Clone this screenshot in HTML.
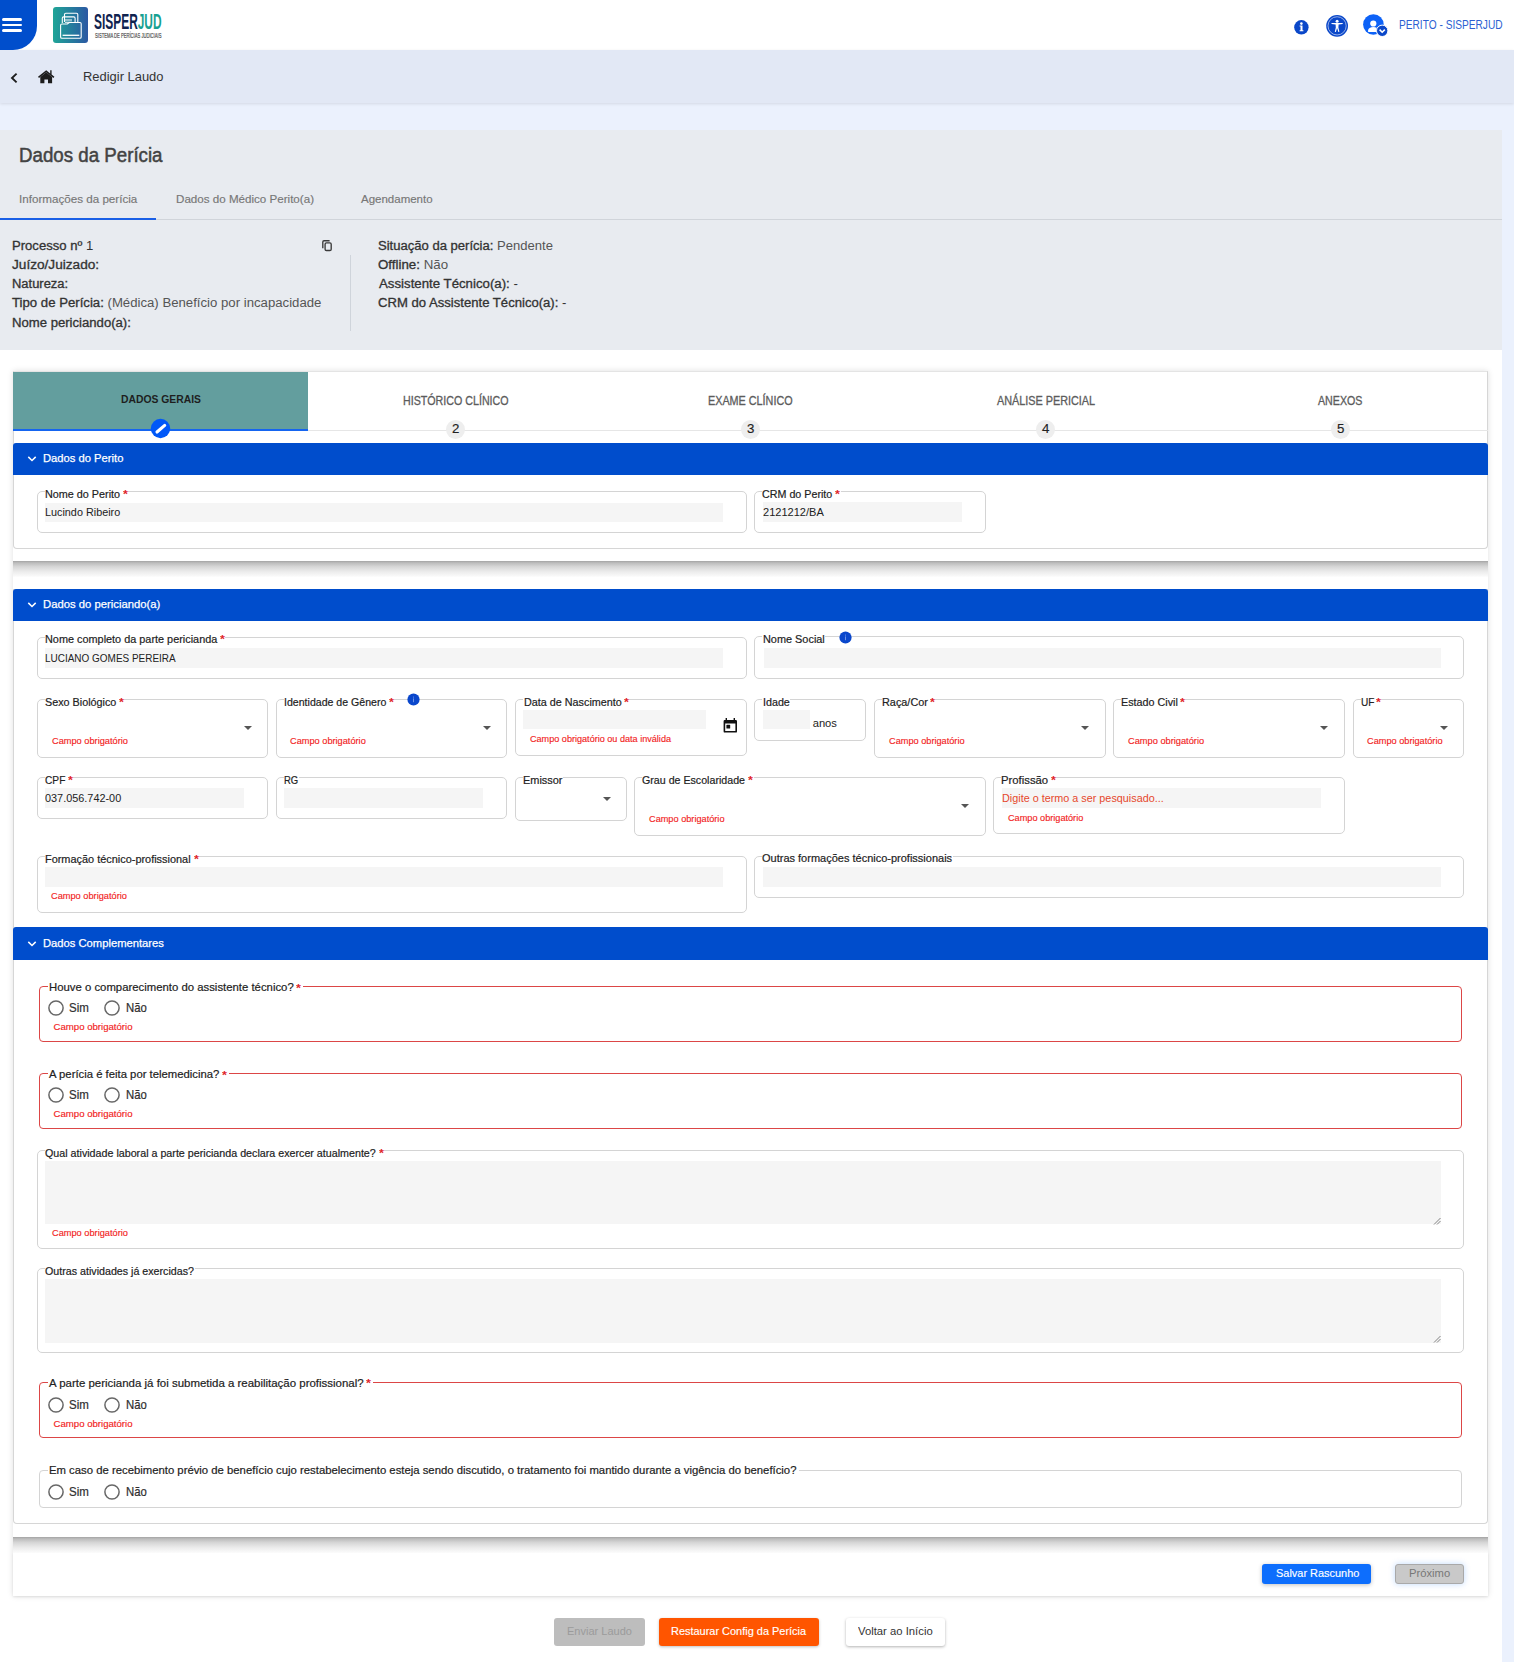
<!DOCTYPE html><html><head><meta charset="utf-8"><style>

*{margin:0;padding:0;box-sizing:border-box}
html,body{width:1514px;height:1662px;overflow:hidden;background:#ebf1fd;font-family:"Liberation Sans",sans-serif}
.a{position:absolute}
.t{position:absolute;white-space:nowrap;line-height:1;transform-origin:0 0}
.t b{font-weight:700}
.fs{position:absolute;border:1px solid #d4d4d4;border-radius:5px;background:#fff}
.ib{position:absolute;background:#f5f5f5}
.lgbg{position:absolute;background:#fff;height:4px}
.arr{position:absolute;width:0;height:0;border-left:4px solid transparent;border-right:4px solid transparent;border-top:4px solid #555}
.rd{position:absolute;width:16px;height:16px;border:1.8px solid #5c5c5c;border-radius:50%}
.hdr{position:absolute;left:13px;width:1475px;background:#004dcc;border-radius:3px 3px 0 0}
.ast{color:#e0262b}

</style></head><body>
<div class="a" style="left:0;top:0;width:1514px;height:50px;background:#fff"></div>
<div class="a" style="left:0;top:50px;width:1514px;height:53px;background:#e2e8f5;box-shadow:0 1px 3px rgba(0,0,0,.10)"></div>
<div class="a" style="left:0;top:0;width:37px;height:50px;background:#004ecc;border-bottom-right-radius:24px"></div>
<div class="a" style="left:2px;top:18.15px;width:20px;height:2.5px;background:#fff;border-radius:2px"></div>
<div class="a" style="left:2px;top:23.95px;width:20px;height:2.5px;background:#fff;border-radius:2px"></div>
<div class="a" style="left:2px;top:29.25px;width:20px;height:2.5px;background:#fff;border-radius:2px"></div>
<div class="a" style="left:53px;top:7px;width:35px;height:36px;border-radius:3px;background:linear-gradient(90deg,#1fa597,#2b58a3)"></div>
<svg class="a" style="left:53px;top:7px" width="35" height="36" viewBox="0 0 35 36" fill="none" stroke="#fff" stroke-width="1.1">
<path d="M11.5 15 V7.5 a1.3 1.3 0 0 1 1.3 -1.3 H23.5 a1.3 1.3 0 0 1 1.3 1.3 V15"/>
<path d="M9.3 16 V11.2 a1.3 1.3 0 0 1 1.3 -1.3 H20.8 a1.3 1.3 0 0 1 1.3 1.3 V15.5"/>
<path d="M12 13 H19 M12 15.3 H19"/>
<path d="M7.6 30 V18.3 a1.3 1.3 0 0 1 1.3 -1.3 H14.3 l2 -1.5 H26.9 a1.3 1.3 0 0 1 1.3 1.3 V30 a1.3 1.3 0 0 1 -1.3 1.3 H8.9 a1.3 1.3 0 0 1 -1.3 -1.3 Z"/>
<path d="M9.6 28.3 H26.3" stroke-width="1.3"/>
</svg>
<svg class="a" style="left:1290px;top:12px" width="100" height="28" viewBox="1290 12 100 28">
<circle cx="1301.4" cy="27.3" r="7.2" fill="#0a47c9"/>
<circle cx="1301.4" cy="23.6" r="1.3" fill="#fff"/>
<path d="M1299.6 25.6 H1302.5 V30.2 H1303.4 V31.2 H1299.6 V30.2 H1300.5 V26.6 H1299.6 Z" fill="#fff"/>
<circle cx="1337.1" cy="25.85" r="10.9" fill="#0a47c9"/>
<circle cx="1337.1" cy="25.85" r="9.1" fill="none" stroke="#b9c9f0" stroke-width="0.8"/>
<circle cx="1337.1" cy="21.2" r="1.5" fill="#fff"/>
<path d="M1331.5 23 L1342.7 23 L1342.7 24.1 L1338.6 24.6 L1338.4 27.6 L1339.4 31.7 L1338.3 31.9 L1337.3 28.4 L1336.9 28.4 L1335.9 31.9 L1334.8 31.7 L1335.8 27.6 L1335.6 24.6 L1331.5 24.1 Z" fill="#fff"/>
<circle cx="1373.4" cy="24.5" r="10.3" fill="#0d62f7"/>
<circle cx="1373.3" cy="23.5" r="3.1" fill="#fff"/>
<path d="M1368.1 31.9 V30.3 c0 -1.9 2.4 -3.2 5.2 -3.2 c1.3 0 2.5 0.3 3.4 0.7 L1376.2 31.9 Z" fill="#fff"/>
<circle cx="1382.2" cy="30.8" r="5.7" fill="#0a47c9" stroke="#fff" stroke-width="1"/>
<path d="M1379.6 29.6 L1382.2 32.2 L1384.8 29.6" fill="none" stroke="#fff" stroke-width="1.6"/>
</svg>
<svg class="a" style="left:8px;top:66px" width="52" height="22" viewBox="8 66 52 22">
<path d="M16.6 73.6 L12 78 L16.6 82.4" fill="none" stroke="#1d1d1d" stroke-width="1.9"/>
<path d="M46.2 70.2 L38 76.8 L39 78 L46.2 72.3 L53.4 78 L54.4 76.8 L51.6 74.5 V70.3 H50.2 V73.4 Z" fill="#1d1d1d"/>
<path d="M40.3 76.9 L46.2 72.3 L52.1 76.9 V83.3 H48 V79.4 H44.4 V83.3 H40.3 Z" fill="#1d1d1d"/>
</svg>
<div class="a" style="left:0;top:129.5px;width:1502px;height:220.5px;background:#e8ebf0"></div>
<div class="a" style="left:0;top:219px;width:1502px;height:1px;background:#d0d4da"></div>
<div class="a" style="left:0;top:217.5px;width:156px;height:2px;background:#1a5fe6"></div>
<svg class="a" style="left:315px;top:235px" width="25" height="20" viewBox="315 235 25 20">
<path d="M322.8 248.2 V241.9 a1.2 1.2 0 0 1 1.2 -1.2 H329.6" fill="none" stroke="#3a3a3a" stroke-width="1.35"/>
<rect x="325.1" y="242.9" width="6.1" height="7.6" rx="1.3" fill="none" stroke="#3a3a3a" stroke-width="1.35"/>
</svg>
<div class="a" style="left:350px;top:255px;width:1px;height:76px;background:#cfd4db"></div>
<div class="a" style="left:0;top:350px;width:1502px;height:1312px;background:#fff"></div>
<div class="a" style="left:13px;top:371px;width:1475px;height:1225px;background:#fff;box-shadow:0 0 6px rgba(0,0,0,.13)"></div>
<div class="a" style="left:13px;top:371px;width:1475px;height:177.5px;border:1px solid #d6d6d6;border-top-color:#e4e4e4;border-radius:0 0 4px 4px;background:#fff"></div>
<div class="a" style="left:13px;top:561px;width:1475px;height:16px;background:linear-gradient(180deg,#a3a3a3 0%,#bdbdbd 12%,#d6d6d6 35%,#ebebeb 65%,#f7f7f7 90%,#fdfdfd 100%)"></div>
<div class="a" style="left:13px;top:372px;width:295px;height:58px;background:#639e9e"></div>
<div class="a" style="left:308px;top:429.5px;width:1180px;height:1.5px;background:#e6e6e6"></div>
<div class="a" style="left:13px;top:429px;width:295px;height:2px;background:#1565f0"></div>
<svg class="a" style="left:150px;top:418px" width="21" height="21" viewBox="0 0 21 21">
<circle cx="10.5" cy="10.5" r="9.7" fill="#0058f8"/>
<path d="M7 14 L14.7 7.4" stroke="#fff" stroke-width="3.1" stroke-linecap="round"/>
</svg>
<div class="a" style="left:445.8px;top:419.5px;width:19px;height:19px;border-radius:50%;background:#eeeeee"></div>
<div class="a" style="left:741.1px;top:419.5px;width:19px;height:19px;border-radius:50%;background:#eeeeee"></div>
<div class="a" style="left:1036.3px;top:419.5px;width:19px;height:19px;border-radius:50%;background:#eeeeee"></div>
<div class="a" style="left:1331.1px;top:419.5px;width:19px;height:19px;border-radius:50%;background:#eeeeee"></div>
<div class="hdr" style="top:442.9px;height:32.10000000000002px"></div>
<svg class="a" style="left:27px;top:453.9px" width="10" height="10" viewBox="0 0 10 10"><path d="M1.3 2.9 L5 6.5 L8.7 2.9" fill="none" stroke="#fff" stroke-width="1.5"/></svg>
<div class="fs" style="left:37.0px;top:491.1px;width:709.5px;height:42.2px;border-color:#d4d4d4"></div>
<div class="a" style="left:45.0px;top:490.6px;width:83.0px;height:3px;background:#fff"></div>
<div class="ib" style="left:45.0px;top:502.5px;width:678.0px;height:19.5px"></div>
<div class="fs" style="left:754.0px;top:491.1px;width:231.9px;height:42.2px;border-color:#d4d4d4"></div>
<div class="a" style="left:762.0px;top:490.6px;width:78.6px;height:3px;background:#fff"></div>
<div class="ib" style="left:763.0px;top:502.3px;width:199.2px;height:19.4px"></div>
<div class="a" style="left:13px;top:589px;width:1475px;height:935px;border:1px solid #d6d6d6;border-top-color:#e4e4e4;border-radius:0 0 4px 4px;background:#fff"></div>
<div class="a" style="left:13px;top:1537px;width:1475px;height:16px;background:linear-gradient(180deg,#a3a3a3 0%,#bdbdbd 12%,#d6d6d6 35%,#ebebeb 65%,#f7f7f7 90%,#fdfdfd 100%)"></div>
<div class="hdr" style="top:588.5px;height:32.10000000000002px"></div>
<svg class="a" style="left:27px;top:599.5px" width="10" height="10" viewBox="0 0 10 10"><path d="M1.3 2.9 L5 6.5 L8.7 2.9" fill="none" stroke="#fff" stroke-width="1.5"/></svg>
<div class="fs" style="left:36.9px;top:636.5px;width:709.7px;height:42.5px;border-color:#d4d4d4"></div>
<div class="a" style="left:44.9px;top:636.0px;width:180.2px;height:3px;background:#fff"></div>
<div class="ib" style="left:45.0px;top:647.7px;width:678.0px;height:19.9px"></div>
<div class="fs" style="left:754.3px;top:636.3px;width:709.7px;height:42.6px;border-color:#d4d4d4"></div>
<div class="a" style="left:762.3px;top:635.8px;width:62.7px;height:3px;background:#fff"></div>
<svg class="a" style="left:839.2px;top:631.0px" width="13" height="13" viewBox="0 0 13 13"><circle cx="6.5" cy="6.5" r="6.1" fill="#0a47cc"/><rect x="6" y="5.4" width="1" height="3.8" fill="#6f93e6"/><rect x="6" y="3.6" width="1" height="1" fill="#6f93e6"/></svg>
<div class="ib" style="left:763.5px;top:647.7px;width:677.5px;height:20.1px"></div>
<div class="fs" style="left:36.9px;top:699.0px;width:231.3px;height:58.7px;border-color:#d4d4d4"></div>
<div class="a" style="left:44.9px;top:698.5px;width:79.1px;height:3px;background:#fff"></div>
<div class="arr" style="left:243.5px;top:726.0px"></div>
<div class="fs" style="left:276.1px;top:699.1px;width:231.4px;height:58.8px;border-color:#d4d4d4"></div>
<div class="a" style="left:284.1px;top:698.6px;width:110.4px;height:3px;background:#fff"></div>
<svg class="a" style="left:406.8px;top:693.4px" width="13" height="13" viewBox="0 0 13 13"><circle cx="6.5" cy="6.5" r="6.1" fill="#0a47cc"/><rect x="6" y="5.4" width="1" height="3.8" fill="#6f93e6"/><rect x="6" y="3.6" width="1" height="1" fill="#6f93e6"/></svg>
<div class="arr" style="left:482.6px;top:725.6px"></div>
<div class="fs" style="left:515.3px;top:699.1px;width:231.7px;height:56.6px;border-color:#d4d4d4"></div>
<div class="a" style="left:523.3px;top:698.6px;width:105.7px;height:3px;background:#fff"></div>
<div class="ib" style="left:523.2px;top:709.5px;width:183.3px;height:19.8px"></div>
<svg class="a" style="left:722px;top:716px" width="17" height="18" viewBox="0 0 17 18">
<path d="M3.6 2 V4 H2.8 a1.2 1.2 0 0 0 -1.2 1.2 V15.4 a1.2 1.2 0 0 0 1.2 1.2 H13.8 a1.2 1.2 0 0 0 1.2 -1.2 V5.2 a1.2 1.2 0 0 0 -1.2 -1.2 H13 V2 H11.6 V4 H5 V2 Z M3.2 7.4 H13.4 V15 H3.2 Z" fill="#111"/>
<rect x="4.4" y="8.8" width="3.8" height="3.8" rx="0.6" fill="#111"/>
</svg>
<div class="fs" style="left:754.3px;top:699.3px;width:112.2px;height:42.0px;border-color:#d4d4d4"></div>
<div class="a" style="left:762.3px;top:698.8px;width:27.7px;height:3px;background:#fff"></div>
<div class="ib" style="left:762.6px;top:709.5px;width:47.6px;height:19.6px"></div>
<div class="fs" style="left:874.0px;top:699.3px;width:232.0px;height:58.4px;border-color:#d4d4d4"></div>
<div class="a" style="left:882.0px;top:698.8px;width:53.4px;height:3px;background:#fff"></div>
<div class="arr" style="left:1080.7px;top:725.9px"></div>
<div class="fs" style="left:1113.1px;top:699.3px;width:231.9px;height:58.4px;border-color:#d4d4d4"></div>
<div class="a" style="left:1121.1px;top:698.8px;width:64.3px;height:3px;background:#fff"></div>
<div class="arr" style="left:1319.7px;top:725.9px"></div>
<div class="fs" style="left:1352.5px;top:699.3px;width:111.7px;height:58.4px;border-color:#d4d4d4"></div>
<div class="a" style="left:1360.5px;top:698.8px;width:20.9px;height:3px;background:#fff"></div>
<div class="arr" style="left:1439.5px;top:725.9px"></div>
<div class="fs" style="left:37.0px;top:777.4px;width:231.3px;height:42.0px;border-color:#d4d4d4"></div>
<div class="a" style="left:45.0px;top:776.9px;width:28.0px;height:3px;background:#fff"></div>
<div class="ib" style="left:44.9px;top:787.8px;width:199.5px;height:19.8px"></div>
<div class="fs" style="left:275.8px;top:777.4px;width:231.7px;height:42.0px;border-color:#d4d4d4"></div>
<div class="a" style="left:283.8px;top:776.9px;width:15.1px;height:3px;background:#fff"></div>
<div class="ib" style="left:284.3px;top:787.8px;width:199.2px;height:19.8px"></div>
<div class="fs" style="left:515.0px;top:777.4px;width:111.7px;height:44.0px;border-color:#d4d4d4"></div>
<div class="a" style="left:523.0px;top:776.9px;width:40.4px;height:3px;background:#fff"></div>
<div class="arr" style="left:602.6px;top:797.1px"></div>
<div class="fs" style="left:634.2px;top:777.4px;width:351.9px;height:59.0px;border-color:#d4d4d4"></div>
<div class="a" style="left:642.2px;top:776.9px;width:111.4px;height:3px;background:#fff"></div>
<div class="arr" style="left:961.4px;top:804.2px"></div>
<div class="fs" style="left:993.2px;top:777.4px;width:351.9px;height:56.9px;border-color:#d4d4d4"></div>
<div class="a" style="left:1001.2px;top:776.9px;width:54.8px;height:3px;background:#fff"></div>
<div class="ib" style="left:1002.0px;top:787.8px;width:318.8px;height:19.8px"></div>
<div class="fs" style="left:37.0px;top:856.4px;width:709.5px;height:56.9px;border-color:#d4d4d4"></div>
<div class="a" style="left:45.0px;top:855.9px;width:154.0px;height:3px;background:#fff"></div>
<div class="ib" style="left:45.0px;top:867.2px;width:678.0px;height:19.4px"></div>
<div class="fs" style="left:754.0px;top:855.7px;width:710.3px;height:42.6px;border-color:#d4d4d4"></div>
<div class="a" style="left:762.0px;top:855.2px;width:191.0px;height:3px;background:#fff"></div>
<div class="ib" style="left:763.0px;top:866.8px;width:677.7px;height:19.8px"></div>
<div class="hdr" style="top:927.3px;height:32.5px"></div>
<svg class="a" style="left:27px;top:938.5px" width="10" height="10" viewBox="0 0 10 10"><path d="M1.3 2.9 L5 6.5 L8.7 2.9" fill="none" stroke="#fff" stroke-width="1.5"/></svg>
<div class="a" style="left:38.5px;top:986.4px;width:1423.5px;height:55.5px;border:1px solid #dc4646;border-radius:4px"></div>
<div class="a" style="left:47.5px;top:985.4px;width:255.5px;height:4px;background:#fff"></div>
<svg class="a" style="left:46.5px;top:998.7px" width="18" height="18" viewBox="0 0 18 18"><circle cx="9" cy="9" r="7.1" fill="none" stroke="#676767" stroke-width="1.5"/></svg>
<svg class="a" style="left:103.0px;top:998.7px" width="18" height="18" viewBox="0 0 18 18"><circle cx="9" cy="9" r="7.1" fill="none" stroke="#676767" stroke-width="1.5"/></svg>
<div class="a" style="left:38.5px;top:1073.4px;width:1423.5px;height:55.5px;border:1px solid #dc4646;border-radius:4px"></div>
<div class="a" style="left:47.5px;top:1072.4px;width:181.5px;height:4px;background:#fff"></div>
<svg class="a" style="left:46.5px;top:1085.7px" width="18" height="18" viewBox="0 0 18 18"><circle cx="9" cy="9" r="7.1" fill="none" stroke="#676767" stroke-width="1.5"/></svg>
<svg class="a" style="left:103.0px;top:1085.7px" width="18" height="18" viewBox="0 0 18 18"><circle cx="9" cy="9" r="7.1" fill="none" stroke="#676767" stroke-width="1.5"/></svg>
<div class="fs" style="left:36.9px;top:1150.1px;width:1427.1px;height:98.7px;border-color:#d4d4d4"></div>
<div class="a" style="left:44.9px;top:1149.6px;width:338.8px;height:3px;background:#fff"></div>
<div class="ib" style="left:45.3px;top:1160.6px;width:1395.7px;height:63.9px"></div>
<div class="fs" style="left:36.9px;top:1268.4px;width:1427.1px;height:84.6px;border-color:#d4d4d4"></div>
<div class="a" style="left:44.9px;top:1267.9px;width:149.9px;height:3px;background:#fff"></div>
<div class="ib" style="left:45.3px;top:1279.0px;width:1395.7px;height:63.7px"></div>
<svg class="a" style="left:1432px;top:1215.5px" width="9" height="9" viewBox="0 0 9 9"><path d="M2 8.5 L8.5 2 M5 8.5 L8.5 5" stroke="#777" stroke-width="0.9"/></svg>
<svg class="a" style="left:1432px;top:1333.7px" width="9" height="9" viewBox="0 0 9 9"><path d="M2 8.5 L8.5 2 M5 8.5 L8.5 5" stroke="#777" stroke-width="0.9"/></svg>
<div class="a" style="left:38.5px;top:1382.3px;width:1423.5px;height:55.7px;border:1px solid #dc4646;border-radius:4px"></div>
<div class="a" style="left:47.5px;top:1381.3px;width:325.0px;height:4px;background:#fff"></div>
<svg class="a" style="left:46.5px;top:1395.5px" width="18" height="18" viewBox="0 0 18 18"><circle cx="9" cy="9" r="7.1" fill="none" stroke="#676767" stroke-width="1.5"/></svg>
<svg class="a" style="left:103.0px;top:1395.5px" width="18" height="18" viewBox="0 0 18 18"><circle cx="9" cy="9" r="7.1" fill="none" stroke="#676767" stroke-width="1.5"/></svg>
<div class="a" style="left:38.5px;top:1469.9px;width:1423.5px;height:37.9px;border:1px solid #d4d4d4;border-radius:4px"></div>
<div class="a" style="left:47.5px;top:1468.9px;width:751.2px;height:4px;background:#fff"></div>
<svg class="a" style="left:46.5px;top:1482.5px" width="18" height="18" viewBox="0 0 18 18"><circle cx="9" cy="9" r="7.1" fill="none" stroke="#676767" stroke-width="1.5"/></svg>
<svg class="a" style="left:103.0px;top:1482.5px" width="18" height="18" viewBox="0 0 18 18"><circle cx="9" cy="9" r="7.1" fill="none" stroke="#676767" stroke-width="1.5"/></svg>
<div class="a" style="left:13px;top:1553px;width:1475px;height:43px;background:#fff;box-shadow:0 1px 2px rgba(0,0,0,.08)"></div>
<div class="a" style="left:1262.2px;top:1564.1px;width:108.8px;height:19.5px;background:#0d6efd;border-radius:3px;box-shadow:0 1px 4px rgba(0,0,0,.25)"></div>
<div class="a" style="left:1395px;top:1564.2px;width:68.8px;height:19.6px;background:#c9c9c9;border:1px solid #a9a9a9;border-radius:3px;box-shadow:0 0 6px rgba(13,110,253,.25)"></div>
<div class="a" style="left:554.4px;top:1618px;width:90.5px;height:27.8px;background:#bdbdbd;border-radius:3px"></div>
<div class="a" style="left:658.7px;top:1618px;width:160.1px;height:27.8px;background:#ff5500;border-radius:3px;box-shadow:0 1px 3px rgba(0,0,0,.25)"></div>
<div class="a" style="left:845.7px;top:1618px;width:99.8px;height:27.8px;background:#fff;border-radius:3px;box-shadow:0 1px 3px rgba(0,0,0,.3)"></div>
<div class="t" id="t0" style="left:94.06px;top:10.75px;font-size:21.8px;color:#10234f;font-weight:700;transform:scaleX(0.5471);"><span style="color:#10234f">SISPER</span><span style="color:#17a192">JUD</span></div>
<div class="t" id="t1" style="left:94.52px;top:31.73px;font-size:8.0px;color:#4a4a4a;transform:scaleX(0.5168);-webkit-text-stroke:0.2px #4a4a4a;">SISTEMA DE PERÍCIAS JUDICIAIS</div>
<div class="t" id="t2" style="left:1398.80px;top:19.24px;font-size:12px;color:#2d5fd2;transform:scaleX(0.8459);">PERITO - SISPERJUD</div>
<div class="t" id="t3" style="left:83.04px;top:69.69px;font-size:13.6px;color:#333;transform:scaleX(0.9509);">Redigir Laudo</div>
<div class="t" id="t4" style="left:18.93px;top:144.87px;font-size:20px;color:#434343;transform:scaleX(0.9353);-webkit-text-stroke:0.5px #434343;">Dados da Perícia</div>
<div class="t" id="t5" style="left:18.57px;top:193.76px;font-size:10.8px;color:#777;transform:scaleX(1.0771);-webkit-text-stroke:0.15px #777;">Informações da perícia</div>
<div class="t" id="t6" style="left:175.87px;top:194.06px;font-size:10.8px;color:#777;transform:scaleX(1.0745);-webkit-text-stroke:0.15px #777;">Dados do Médico Perito(a)</div>
<div class="t" id="t7" style="left:361.20px;top:194.06px;font-size:10.8px;color:#777;transform:scaleX(1.0649);-webkit-text-stroke:0.15px #777;">Agendamento</div>
<div class="t" id="t8" style="left:11.64px;top:239.54px;font-size:12px;color:#333;transform:scaleX(1.0908);"><span style="-webkit-text-stroke:0.3px #333">Processo nº</span> 1</div>
<div class="t" id="t9" style="left:11.90px;top:258.84px;font-size:12px;color:#333;transform:scaleX(1.1353);"><span style="-webkit-text-stroke:0.3px #333">Juízo/Juizado:</span></div>
<div class="t" id="t10" style="left:11.64px;top:278.14px;font-size:12px;color:#333;transform:scaleX(1.0782);"><span style="-webkit-text-stroke:0.3px #333">Natureza:</span></div>
<div class="t" id="t11" style="left:11.90px;top:297.44px;font-size:12px;color:#333;transform:scaleX(1.0982);"><span style="-webkit-text-stroke:0.3px #333">Tipo de Perícia:</span> <span style="color:#555">(Médica) Benefício por incapacidade</span></div>
<div class="t" id="t12" style="left:11.64px;top:316.74px;font-size:12px;color:#333;transform:scaleX(1.0936);"><span style="-webkit-text-stroke:0.3px #333">Nome periciando(a):</span></div>
<div class="t" id="t13" style="left:378.44px;top:240.04px;font-size:12px;color:#333;transform:scaleX(1.0876);"><span style="-webkit-text-stroke:0.3px #333">Situação da perícia:</span> <span style="color:#555">Pendente</span></div>
<div class="t" id="t14" style="left:378.43px;top:258.84px;font-size:12px;color:#333;transform:scaleX(1.1097);"><span style="-webkit-text-stroke:0.3px #333">Offline:</span> <span style="color:#555">Não</span></div>
<div class="t" id="t15" style="left:378.70px;top:277.74px;font-size:12px;color:#333;transform:scaleX(1.1037);"><span style="-webkit-text-stroke:0.3px #333">Assistente Técnico(a):</span> -</div>
<div class="t" id="t16" style="left:378.44px;top:297.14px;font-size:12px;color:#333;transform:scaleX(1.0920);"><span style="-webkit-text-stroke:0.3px #333">CRM do Assistente Técnico(a):</span> -</div>
<div class="t" id="t17" style="left:120.59px;top:394.31px;font-size:11.8px;color:#1e1e1e;font-weight:700;transform:scaleX(0.8781);">DADOS GERAIS</div>
<div class="t" id="t18" style="left:402.79px;top:394.74px;font-size:12px;color:#5c5c5c;transform:scaleX(0.8897);-webkit-text-stroke:0.3px #5c5c5c;">HISTÓRICO CLÍNICO</div>
<div class="t" id="t19" style="left:708.18px;top:394.74px;font-size:12px;color:#5c5c5c;transform:scaleX(0.8997);-webkit-text-stroke:0.3px #5c5c5c;">EXAME CLÍNICO</div>
<div class="t" id="t20" style="left:996.50px;top:394.74px;font-size:12px;color:#5c5c5c;transform:scaleX(0.9023);-webkit-text-stroke:0.3px #5c5c5c;">ANÁLISE PERICIAL</div>
<div class="t" id="t21" style="left:1318.20px;top:394.74px;font-size:12px;color:#5c5c5c;transform:scaleX(0.8877);-webkit-text-stroke:0.3px #5c5c5c;">ANEXOS</div>
<div class="t" id="t22" style="left:451.63px;top:422.73px;font-size:12.6px;color:#222;transform:scaleX(1.0548);-webkit-text-stroke:0.15px #222;">2</div>
<div class="t" id="t23" style="left:746.93px;top:422.73px;font-size:12.6px;color:#222;transform:scaleX(1.0548);-webkit-text-stroke:0.15px #222;">3</div>
<div class="t" id="t24" style="left:1042.13px;top:422.73px;font-size:12.6px;color:#222;transform:scaleX(1.0548);-webkit-text-stroke:0.15px #222;">4</div>
<div class="t" id="t25" style="left:1336.93px;top:422.73px;font-size:12.6px;color:#222;transform:scaleX(1.0548);-webkit-text-stroke:0.15px #222;">5</div>
<div class="t" id="t26" style="left:43.38px;top:453.20px;font-size:11.4px;color:#fff;transform:scaleX(0.9842);-webkit-text-stroke:0.25px #fff;">Dados do Perito</div>
<div class="t" id="t27" style="left:45.28px;top:488.67px;font-size:11.5px;color:#222;transform:scaleX(0.9399);-webkit-text-stroke:0.2px #222;">Nome do Perito</div>
<div class="t" id="t28" style="left:122.80px;top:488.69px;font-size:11px;color:#e0262b;font-weight:700;transform:scaleX(1.1445);">*</div>
<div class="t" id="t29" style="left:45.18px;top:506.62px;font-size:11.2px;color:#222;transform:scaleX(0.9672);">Lucindo Ribeiro</div>
<div class="t" id="t30" style="left:762.29px;top:488.67px;font-size:11.5px;color:#222;transform:scaleX(0.9321);-webkit-text-stroke:0.2px #222;">CRM do Perito</div>
<div class="t" id="t31" style="left:835.40px;top:488.69px;font-size:11px;color:#e0262b;font-weight:700;transform:scaleX(1.1445);">*</div>
<div class="t" id="t32" style="left:763.28px;top:506.82px;font-size:11.2px;color:#222;transform:scaleX(0.9871);">2121212/BA</div>
<div class="t" id="t33" style="left:43.37px;top:598.80px;font-size:11.4px;color:#fff;transform:scaleX(0.9907);-webkit-text-stroke:0.25px #fff;">Dados do periciando(a)</div>
<div class="t" id="t34" style="left:45.18px;top:634.07px;font-size:11.5px;color:#222;transform:scaleX(0.9457);-webkit-text-stroke:0.2px #222;">Nome completo da parte pericianda</div>
<div class="t" id="t35" style="left:219.90px;top:634.09px;font-size:11px;color:#e0262b;font-weight:700;transform:scaleX(1.1445);">*</div>
<div class="t" id="t36" style="left:45.20px;top:652.52px;font-size:11.2px;color:#222;transform:scaleX(0.8908);">LUCIANO GOMES PEREIRA</div>
<div class="t" id="t37" style="left:762.58px;top:633.87px;font-size:11.5px;color:#222;transform:scaleX(0.9478);-webkit-text-stroke:0.2px #222;">Nome Social</div>
<div class="t" id="t38" style="left:45.18px;top:696.57px;font-size:11.5px;color:#222;transform:scaleX(0.9372);-webkit-text-stroke:0.2px #222;">Sexo Biológico</div>
<div class="t" id="t39" style="left:118.80px;top:696.59px;font-size:11px;color:#e0262b;font-weight:700;transform:scaleX(1.1445);">*</div>
<div class="t" id="t40" style="left:51.52px;top:736.07px;font-size:9.6px;color:#f21d1d;transform:scaleX(0.9615);-webkit-text-stroke:0.15px #f21d1d;">Campo obrigatório</div>
<div class="t" id="t41" style="left:284.39px;top:696.67px;font-size:11.5px;color:#222;transform:scaleX(0.9203);-webkit-text-stroke:0.2px #222;">Identidade de Gênero</div>
<div class="t" id="t42" style="left:389.30px;top:696.69px;font-size:11px;color:#e0262b;font-weight:700;transform:scaleX(1.1445);">*</div>
<div class="t" id="t43" style="left:290.42px;top:735.97px;font-size:9.6px;color:#f21d1d;transform:scaleX(0.9603);-webkit-text-stroke:0.15px #f21d1d;">Campo obrigatório</div>
<div class="t" id="t44" style="left:523.58px;top:696.67px;font-size:11.5px;color:#222;transform:scaleX(0.9386);-webkit-text-stroke:0.2px #222;">Data de Nascimento</div>
<div class="t" id="t45" style="left:623.80px;top:696.69px;font-size:11px;color:#e0262b;font-weight:700;transform:scaleX(1.1445);">*</div>
<div class="t" id="t46" style="left:529.92px;top:734.27px;font-size:9.6px;color:#f21d1d;transform:scaleX(0.9476);-webkit-text-stroke:0.15px #f21d1d;">Campo obrigatório ou data inválida</div>
<div class="t" id="t47" style="left:762.59px;top:696.87px;font-size:11.5px;color:#222;transform:scaleX(0.9312);-webkit-text-stroke:0.2px #222;">Idade</div>
<div class="t" id="t48" style="left:812.68px;top:717.62px;font-size:11.2px;color:#222;">anos</div>
<div class="t" id="t49" style="left:882.28px;top:696.87px;font-size:11.5px;color:#222;transform:scaleX(0.9449);-webkit-text-stroke:0.2px #222;">Raça/Cor</div>
<div class="t" id="t50" style="left:930.20px;top:696.89px;font-size:11px;color:#e0262b;font-weight:700;transform:scaleX(1.1445);">*</div>
<div class="t" id="t51" style="left:888.52px;top:735.57px;font-size:9.6px;color:#f21d1d;transform:scaleX(0.9577);-webkit-text-stroke:0.15px #f21d1d;">Campo obrigatório</div>
<div class="t" id="t52" style="left:1121.38px;top:696.87px;font-size:11.5px;color:#222;transform:scaleX(0.9355);-webkit-text-stroke:0.2px #222;">Estado Civil</div>
<div class="t" id="t53" style="left:1180.20px;top:696.89px;font-size:11px;color:#e0262b;font-weight:700;transform:scaleX(1.1445);">*</div>
<div class="t" id="t54" style="left:1127.51px;top:735.57px;font-size:9.6px;color:#f21d1d;transform:scaleX(0.9641);-webkit-text-stroke:0.15px #f21d1d;">Campo obrigatório</div>
<div class="t" id="t55" style="left:1360.80px;top:696.87px;font-size:11.5px;color:#222;transform:scaleX(0.8733);-webkit-text-stroke:0.2px #222;">UF</div>
<div class="t" id="t56" style="left:1376.20px;top:696.89px;font-size:11px;color:#e0262b;font-weight:700;transform:scaleX(1.1445);">*</div>
<div class="t" id="t57" style="left:1367.02px;top:735.57px;font-size:9.6px;color:#f21d1d;transform:scaleX(0.9577);-webkit-text-stroke:0.15px #f21d1d;">Campo obrigatório</div>
<div class="t" id="t58" style="left:45.30px;top:774.97px;font-size:11.5px;color:#222;transform:scaleX(0.8870);-webkit-text-stroke:0.2px #222;">CPF</div>
<div class="t" id="t59" style="left:67.80px;top:774.99px;font-size:11px;color:#e0262b;font-weight:700;transform:scaleX(1.1445);">*</div>
<div class="t" id="t60" style="left:45.28px;top:793.12px;font-size:11.2px;color:#222;transform:scaleX(0.9721);">037.056.742-00</div>
<div class="t" id="t61" style="left:284.11px;top:774.97px;font-size:11.5px;color:#222;transform:scaleX(0.8232);-webkit-text-stroke:0.2px #222;">RG</div>
<div class="t" id="t62" style="left:523.28px;top:774.97px;font-size:11.5px;color:#222;transform:scaleX(0.9511);-webkit-text-stroke:0.2px #222;">Emissor</div>
<div class="t" id="t63" style="left:642.49px;top:774.97px;font-size:11.5px;color:#222;transform:scaleX(0.9260);-webkit-text-stroke:0.2px #222;">Grau de Escolaridade</div>
<div class="t" id="t64" style="left:748.40px;top:774.99px;font-size:11px;color:#e0262b;font-weight:700;transform:scaleX(1.1445);">*</div>
<div class="t" id="t65" style="left:649.42px;top:813.77px;font-size:9.6px;color:#f21d1d;transform:scaleX(0.9565);-webkit-text-stroke:0.15px #f21d1d;">Campo obrigatório</div>
<div class="t" id="t66" style="left:1001.47px;top:774.97px;font-size:11.5px;color:#222;transform:scaleX(0.9825);-webkit-text-stroke:0.2px #222;">Profissão</div>
<div class="t" id="t67" style="left:1050.80px;top:774.99px;font-size:11px;color:#e0262b;font-weight:700;transform:scaleX(1.1445);">*</div>
<div class="t" id="t68" style="left:1002.38px;top:792.95px;font-size:11.4px;color:#e6472b;transform:scaleX(0.9493);">Digite o termo a ser pesquisado...</div>
<div class="t" id="t69" style="left:1008.32px;top:812.77px;font-size:9.6px;color:#f21d1d;transform:scaleX(0.9539);-webkit-text-stroke:0.15px #f21d1d;">Campo obrigatório</div>
<div class="t" id="t70" style="left:45.28px;top:853.97px;font-size:11.5px;color:#222;transform:scaleX(0.9491);-webkit-text-stroke:0.2px #222;">Formação técnico-profissional</div>
<div class="t" id="t71" style="left:193.80px;top:853.99px;font-size:11px;color:#e0262b;font-weight:700;transform:scaleX(1.1445);">*</div>
<div class="t" id="t72" style="left:51.22px;top:890.77px;font-size:9.6px;color:#f21d1d;transform:scaleX(0.9615);-webkit-text-stroke:0.15px #f21d1d;">Campo obrigatório</div>
<div class="t" id="t73" style="left:762.28px;top:853.27px;font-size:11.5px;color:#222;transform:scaleX(0.9563);-webkit-text-stroke:0.2px #222;">Outras formações técnico-profissionais</div>
<div class="t" id="t74" style="left:43.38px;top:937.80px;font-size:11.4px;color:#fff;transform:scaleX(0.9843);-webkit-text-stroke:0.25px #fff;">Dados Complementares</div>
<div class="t" id="t75" style="left:49.17px;top:980.98px;font-size:11.6px;color:#222;transform:scaleX(0.9786);-webkit-text-stroke:0.2px #222;">Houve o comparecimento do assistente técnico?</div>
<div class="t" id="t76" style="left:296.30px;top:982.89px;font-size:11px;color:#e0262b;font-weight:700;transform:scaleX(1.1445);">*</div>
<div class="t" id="t77" style="left:69.47px;top:1002.83px;font-size:11.9px;color:#333;transform:scaleX(0.9666);-webkit-text-stroke:0.2px #222;">Sim</div>
<div class="t" id="t78" style="left:126.47px;top:1002.83px;font-size:11.9px;color:#333;transform:scaleX(0.9529);-webkit-text-stroke:0.2px #222;">Não</div>
<div class="t" id="t79" style="left:53.61px;top:1021.77px;font-size:9.6px;color:#f21d1d;-webkit-text-stroke:0.15px #f21d1d;">Campo obrigatório</div>
<div class="t" id="t80" style="left:49.40px;top:1067.98px;font-size:11.6px;color:#222;transform:scaleX(0.9756);-webkit-text-stroke:0.2px #222;">A perícia é feita por telemedicina?</div>
<div class="t" id="t81" style="left:222.30px;top:1069.89px;font-size:11px;color:#e0262b;font-weight:700;transform:scaleX(1.1445);">*</div>
<div class="t" id="t82" style="left:69.47px;top:1089.83px;font-size:11.9px;color:#333;transform:scaleX(0.9666);-webkit-text-stroke:0.2px #222;">Sim</div>
<div class="t" id="t83" style="left:126.47px;top:1089.83px;font-size:11.9px;color:#333;transform:scaleX(0.9529);-webkit-text-stroke:0.2px #222;">Não</div>
<div class="t" id="t84" style="left:53.61px;top:1109.27px;font-size:9.6px;color:#f21d1d;-webkit-text-stroke:0.15px #f21d1d;">Campo obrigatório</div>
<div class="t" id="t85" style="left:45.19px;top:1147.67px;font-size:11.5px;color:#222;transform:scaleX(0.9306);-webkit-text-stroke:0.2px #222;">Qual atividade laboral a parte pericianda declara exercer atualmente?</div>
<div class="t" id="t86" style="left:378.50px;top:1147.69px;font-size:11px;color:#e0262b;font-weight:700;transform:scaleX(1.1445);">*</div>
<div class="t" id="t87" style="left:51.52px;top:1227.87px;font-size:9.6px;color:#f21d1d;transform:scaleX(0.9615);-webkit-text-stroke:0.15px #f21d1d;">Campo obrigatório</div>
<div class="t" id="t88" style="left:45.19px;top:1265.97px;font-size:11.5px;color:#222;transform:scaleX(0.9286);-webkit-text-stroke:0.2px #222;">Outras atividades já exercidas?</div>
<div class="t" id="t89" style="left:49.40px;top:1376.58px;font-size:11.6px;color:#222;transform:scaleX(0.9881);-webkit-text-stroke:0.2px #222;">A parte pericianda já foi submetida a reabilitação profissional?</div>
<div class="t" id="t90" style="left:365.80px;top:1378.49px;font-size:11px;color:#e0262b;font-weight:700;transform:scaleX(1.1445);">*</div>
<div class="t" id="t91" style="left:69.47px;top:1399.63px;font-size:11.9px;color:#333;transform:scaleX(0.9666);-webkit-text-stroke:0.2px #222;">Sim</div>
<div class="t" id="t92" style="left:126.47px;top:1399.63px;font-size:11.9px;color:#333;transform:scaleX(0.9529);-webkit-text-stroke:0.2px #222;">Não</div>
<div class="t" id="t93" style="left:53.61px;top:1418.67px;font-size:9.6px;color:#f21d1d;-webkit-text-stroke:0.15px #f21d1d;">Campo obrigatório</div>
<div class="t" id="t94" style="left:49.17px;top:1463.58px;font-size:11.6px;color:#222;transform:scaleX(0.9762);-webkit-text-stroke:0.2px #222;">Em caso de recebimento prévio de benefício cujo restabelecimento esteja sendo discutido, o tratamento foi mantido durante a vigência do benefício?</div>
<div class="t" id="t95" style="left:69.47px;top:1486.63px;font-size:11.9px;color:#333;transform:scaleX(0.9666);-webkit-text-stroke:0.2px #222;">Sim</div>
<div class="t" id="t96" style="left:126.47px;top:1486.63px;font-size:11.9px;color:#333;transform:scaleX(0.9529);-webkit-text-stroke:0.2px #222;">Não</div>
<div class="t" id="t97" style="left:1275.58px;top:1567.92px;font-size:11.2px;color:#fff;transform:scaleX(0.9788);-webkit-text-stroke:0.15px #fff;">Salvar Rascunho</div>
<div class="t" id="t98" style="left:1408.98px;top:1567.92px;font-size:11.2px;color:#777;transform:scaleX(1.0041);">Próximo</div>
<div class="t" id="t99" style="left:567.48px;top:1625.92px;font-size:11.2px;color:#9b9b9b;transform:scaleX(0.9858);">Enviar Laudo</div>
<div class="t" id="t100" style="left:670.98px;top:1625.92px;font-size:11.2px;color:#fff;transform:scaleX(0.9787);-webkit-text-stroke:0.15px #fff;">Restaurar Config da Perícia</div>
<div class="t" id="t101" style="left:858.40px;top:1625.92px;font-size:11.2px;color:#333;transform:scaleX(1.0092);">Voltar ao Início</div>
</body></html>
